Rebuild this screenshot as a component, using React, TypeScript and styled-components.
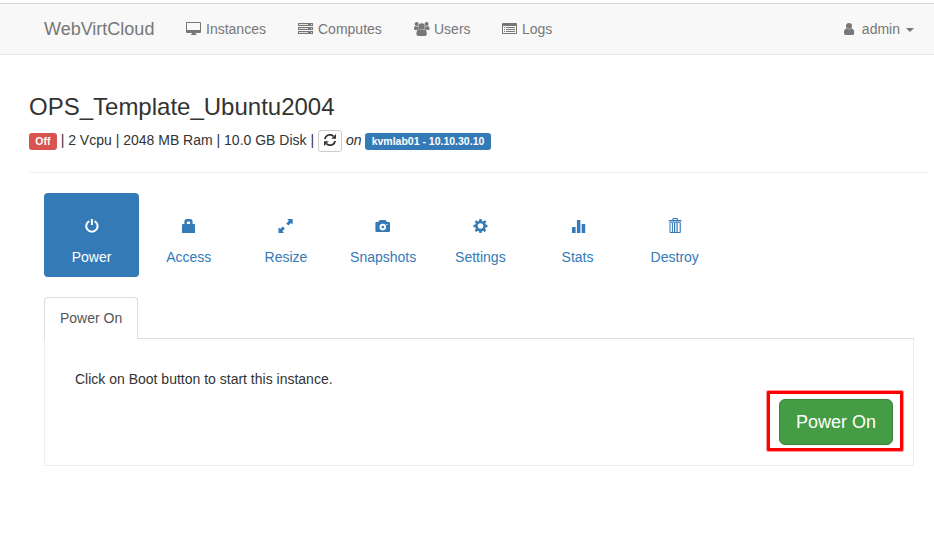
import React from "react";
import styled, { createGlobalStyle } from "styled-components";

const GlobalStyle = createGlobalStyle`
  * { box-sizing: border-box; }
  body {
    margin: 0;
    background: #fff;
    color: #333;
    font: 14px/20px "Liberation Sans", Arial, sans-serif;
    overflow: hidden;
  }
`;

const Page = styled.div`
  height: 534px;
  padding-top: 3px;
`;

const Navbar = styled.nav`
  display: flex;
  align-items: center;
  height: 52px;
  padding: 0 20px 0 44px;
  background: #f8f8f8;
  border-top: 1px solid #d9d9d9;
  border-bottom: 1px solid #e7e7e7;
  color: #777;
`;

const Brand = styled.span`
  width: 142px;
  font-size: 18px;
`;

const NavItem = styled.a<{ $width?: number }>`
  display: flex;
  align-items: center;
  gap: 4px;
  width: ${(p) => (p.$width ? `${p.$width}px` : "auto")};
  white-space: nowrap;
`;

const UserMenu = styled(NavItem)`
  margin-left: auto;
  gap: 6px;
`;

const Caret = styled.span`
  margin: 2px 0 0;
  border: 4px solid transparent;
  border-top-color: #777;
  border-bottom: 0;
`;

const Icon = styled.svg`
  display: block;
  flex: none;
  fill: currentColor;
`;

const Header = styled.header`
  margin-left: 29px;
  width: 900px;
  height: 118px;
  padding-top: 38px;
  border-bottom: 1px solid #eee;
`;

const Title = styled.h3`
  margin: 0;
  font-size: 24px;
  line-height: 28px;
  font-weight: 400;
`;

const Summary = styled.div`
  display: flex;
  align-items: center;
  height: 22px;
  margin-top: 9px;
  white-space: pre;
`;

const Label = styled.span<{ $color: string }>`
  height: 17px;
  margin-top: 1px;
  padding: 0 6.3px;
  border-radius: 3px;
  background: ${(p) => p.$color};
  color: #fff;
  font-size: 10.5px;
  font-weight: 700;
  line-height: 17px;
`;

const Specs = styled.span`
  margin-top: -2px;
`;

const RefreshButton = styled.button`
  display: flex;
  align-items: center;
  justify-content: center;
  width: 24px;
  height: 22px;
  padding: 0 0 2px;
  border: 1px solid #ccc;
  border-radius: 3px;
  background: #fff;
  color: #333;
`;

const Content = styled.main`
  width: 870px;
  margin: 20px 0 0 44px;
`;

const Actions = styled.div`
  display: flex;
  gap: 2px;
`;

const Action = styled.a<{ $active?: boolean }>`
  display: flex;
  flex-direction: column;
  align-items: center;
  width: 95.2px;
  height: 84px;
  padding-top: 25px;
  gap: 11px;
  border-radius: 4px;
  background: ${(p) => (p.$active ? "#337ab7" : "transparent")};
  color: ${(p) => (p.$active ? "#fff" : "#337ab7")};
`;

const Tabs = styled.div`
  display: flex;
  height: 42px;
  margin-top: 20px;
  border-bottom: 1px solid #ddd;
`;

const Tab = styled.a`
  height: 42px;
  width: 94px;
  padding: 10px 15px;
  border: 1px solid #ddd;
  border-bottom-color: transparent;
  border-radius: 4px 4px 0 0;
  background: #fff;
  color: #555;
  white-space: nowrap;
`;

const Panel = styled.section`
  display: flex;
  flex-direction: column;
  height: 127px;
  padding: 30px 20px 0 30px;
  border: 1px solid #eee;
  border-top: 0;
`;

const Instruction = styled.p`
  margin: 0;
`;

const PowerButton = styled.button`
  flex: none;
  width: 114px;
  height: 46px;
  padding: 0;
  border: 1px solid #398439;
  border-radius: 6px;
  background: #449d44;
  color: #fff;
  font: 18px/24px "Liberation Sans", Arial, sans-serif;
`;

const HighlightedButton = styled.div`
  align-self: flex-end;
  display: flex;
  flex: none;
  width: 136px;
  height: 60px;
  margin: 2px -10px 0 0;
  padding: 5px 9px;
  border: 3px solid #fe0000;
  border-radius: 1px;
  box-shadow: 0 0 0 1px rgba(254, 0, 0, 0.4);
`;

const Desktop = () => (
  <Icon width="16" height="14" viewBox="0 0 16 14">
    <path fillRule="evenodd" d="M1 0H14Q15 0 15 1V10Q15 11 14 11H9.500V12H10.500V13H5V12H6V11H1Q0 11 0 10V1Q0 0 1 0ZM1 1V8H14V1Z" />
  </Icon>
);
const Server = () => (
  <Icon width="16" height="12" viewBox="0 0 16 12">
    <path d="M0 0H15V3H0ZM0 4H15V7H0ZM0 8H15V11H0Z" />
    <path fill="#e1e1e1" d="M1 1H10V2H1ZM13 1H14V2H13ZM1 5H10V6H1ZM13 5H14V6H13ZM1 9H10V10H1ZM13 9H14V10H13Z" />
  </Icon>
);
const Users = () => (
  <Icon width="16" height="14" viewBox="0 0 16 14">
    <circle cx="2.600" cy="2" r="2" /><circle cx="12.600" cy="2" r="2" /><circle cx="7.600" cy="4.500" r="3.200" />
    <path d="M1 4.100Q3 5 4 4.300Q4.300 6 5.200 7.500H3.500L2 8H1Q0 8 0 7Q0 4.500 1 4.100ZM14.200 4.100Q12.600 5 11.300 4.300Q11.200 6 10 7.500H11.800L13.500 8H14.500Q15.500 8 15.500 7Q15.500 4.500 14.200 4.100ZM4.600 7Q7.600 9 10.700 7Q12.800 8 12.800 12Q12.800 14 11 14H4.500Q2.400 14 2.400 12Q2.400 8 4.600 7Z" />
  </Icon>
);
const Logs = () => (
  <Icon width="16" height="12" viewBox="0 0 16 12">
    <path fillRule="evenodd" d="M1 0H14Q15 0 15 1V10Q15 11 14 11H1Q0 11 0 10V1Q0 0 1 0ZM1 3V10H14V3Z" />
    <path d="M2 4H3V5H2ZM4 4H13V5H4ZM2 6H3V7H2ZM4 6H13V7H4ZM2 8H3V9H2ZM4 8H13V9H4Z" />
  </Icon>
);
const Person = () => (
  <Icon width="12" height="13" viewBox="0 0 12 13">
    <circle cx="5" cy="3" r="3" />
    <path d="M2.200 5.300Q5 7.500 7.800 5.300Q10.200 6.300 10.200 10Q10.200 12 8.500 12H1.800Q0 12 0 10Q0 6.300 2.200 5.300Z" />
  </Icon>
);
const Refresh = () => (
  <Icon width="12" height="12" viewBox="0 0 12 12">
    <path d="M.9 5A5.100 5.100 0 0 1 9.500 2.300M11.100 7A5.100 5.100 0 0 1 2.500 9.700" fill="none" stroke="currentColor" strokeWidth="1.700" />
    <path d="M12 0V4.700H7.300ZM0 12V7.300H4.700Z" />
  </Icon>
);

const actionIcons: Record<string, React.ReactNode> = {
  Power: (
    <>
      <path d="M5.200 3.100A5.700 5.700 0 1 0 10.600 3.100" fill="none" stroke="currentColor" strokeWidth="2" />
      <path d="M6.900 1H8.900V7H6.900Z" />
    </>
  ),
  Access: <path fillRule="evenodd" d="M1 7Q1 6 2 6H3.400V3.500Q3.400 1 6 1H9Q11.600 1 11.600 3.500V6H13Q14 6 14 7V15H1ZM5.800 6H9.200V4.400Q9.200 3.400 8.200 3.400H6.800Q5.800 3.400 5.800 4.400Z" />,
  Resize: <path d="M9.200 1H14.700V6.500L13 4.900L10.300 7.400L8.300 5.400L10.900 2.700ZM4.800 8.600L6.800 10.600L4.400 13.200L6 15H.5V9.300L2.200 11Z" />,
  Snapshots: <path fillRule="evenodd" d="M5 2H10.500L12.300 4H14Q15 4 15 5V13Q15 14 14 14H1.400Q.4 14 .4 13V5Q.4 4 1.400 4H3ZM7.800 5.800A3.300 3.300 0 1 0 7.800 12.400A3.300 3.300 0 1 0 7.800 5.800ZM7.800 7.800A1.300 1.300 0 1 1 7.800 10.400A1.300 1.300 0 1 1 7.800 7.800ZM11.400 5.900V7H12.500V5.900Z" />,
  Settings: <path fillRule="evenodd" transform="translate(.5 0)" d="M6.900 1H9.100L9.500 3L10.800 3.500L12.500 2.200L14 3.700L12.700 5.300L13.200 6.600L15 7V9.100L13.200 9.500L12.600 10.800L13.700 12.400L12.200 14L10.600 12.700L9.400 13.200L9 15H6.900L6.500 13.200L5.300 12.700L3.700 13.900L2.200 12.400L3.400 10.800L2.900 9.500L1 9.100V7L2.900 6.600L3.400 5.300L2.200 3.700L3.700 2.200L5.300 3.400L6.500 2.900ZM8 5.200A2.800 2.800 0 1 0 8 10.800A2.800 2.800 0 1 0 8 5.200Z" />,
  Stats: <path d="M2 9.500Q2 9 2.500 9H5.100Q5.600 9 5.600 9.500V15H2ZM6.900 2.500Q6.900 2 7.400 2H9.900Q10.400 2 10.400 2.500V15H6.900ZM11.700 6.500Q11.700 6 12.200 6H14.700Q15.200 6 15.200 6.500V15H11.700Z" />,
  Destroy: <path fillRule="evenodd" d="M6 0H10.400L11.200 2H14.500V3.500H1.700V2H5ZM6.600 1L6.300 2H10L9.600 1ZM2.500 4.200H13.800V14Q13.800 15 12.800 15H3.500Q2.500 15 2.500 14ZM3.500 5V14H4.900V5ZM5.900 5V14H7V5ZM8.200 5V14H9.500V5ZM10.700 5V14H12.700V5Z" />,
};

const App: React.FC = () => (
  <>
    <GlobalStyle />
    <Page>
      <Navbar>
        <Brand>WebVirtCloud</Brand>
        <NavItem $width={112}><Desktop />Instances</NavItem>
        <NavItem $width={116}><Server />Computes</NavItem>
        <NavItem $width={88}><Users />Users</NavItem>
        <NavItem><Logs />Logs</NavItem>
        <UserMenu><Person /> admin <Caret /></UserMenu>
      </Navbar>
      <Header>
        <Title>OPS_Template_Ubuntu2004</Title>
        <Summary>
          <Label $color="#d9534f">Off</Label>
          <Specs> | 2 Vcpu | 2048 MB Ram | 10.0 GB Disk | </Specs>
          <RefreshButton aria-label="Refresh"><Refresh /></RefreshButton>
          <Specs> <em>on</em> </Specs>
          <Label $color="#337ab7">kvmlab01 - 10.10.30.10</Label>
        </Summary>
      </Header>
      <Content>
        <Actions>
          {Object.entries(actionIcons).map(([name, icon]) => (
            <Action key={name} $active={name === "Power"}>
              <Icon width="16" height="18" viewBox="0 0 16 18">{icon}</Icon>
              {name}
            </Action>
          ))}
        </Actions>
        <Tabs><Tab>Power On</Tab></Tabs>
        <Panel>
          <Instruction>Click on Boot button to start this instance.</Instruction>
          <HighlightedButton><PowerButton>Power On</PowerButton></HighlightedButton>
        </Panel>
      </Content>
    </Page>
  </>
);

export default App;
